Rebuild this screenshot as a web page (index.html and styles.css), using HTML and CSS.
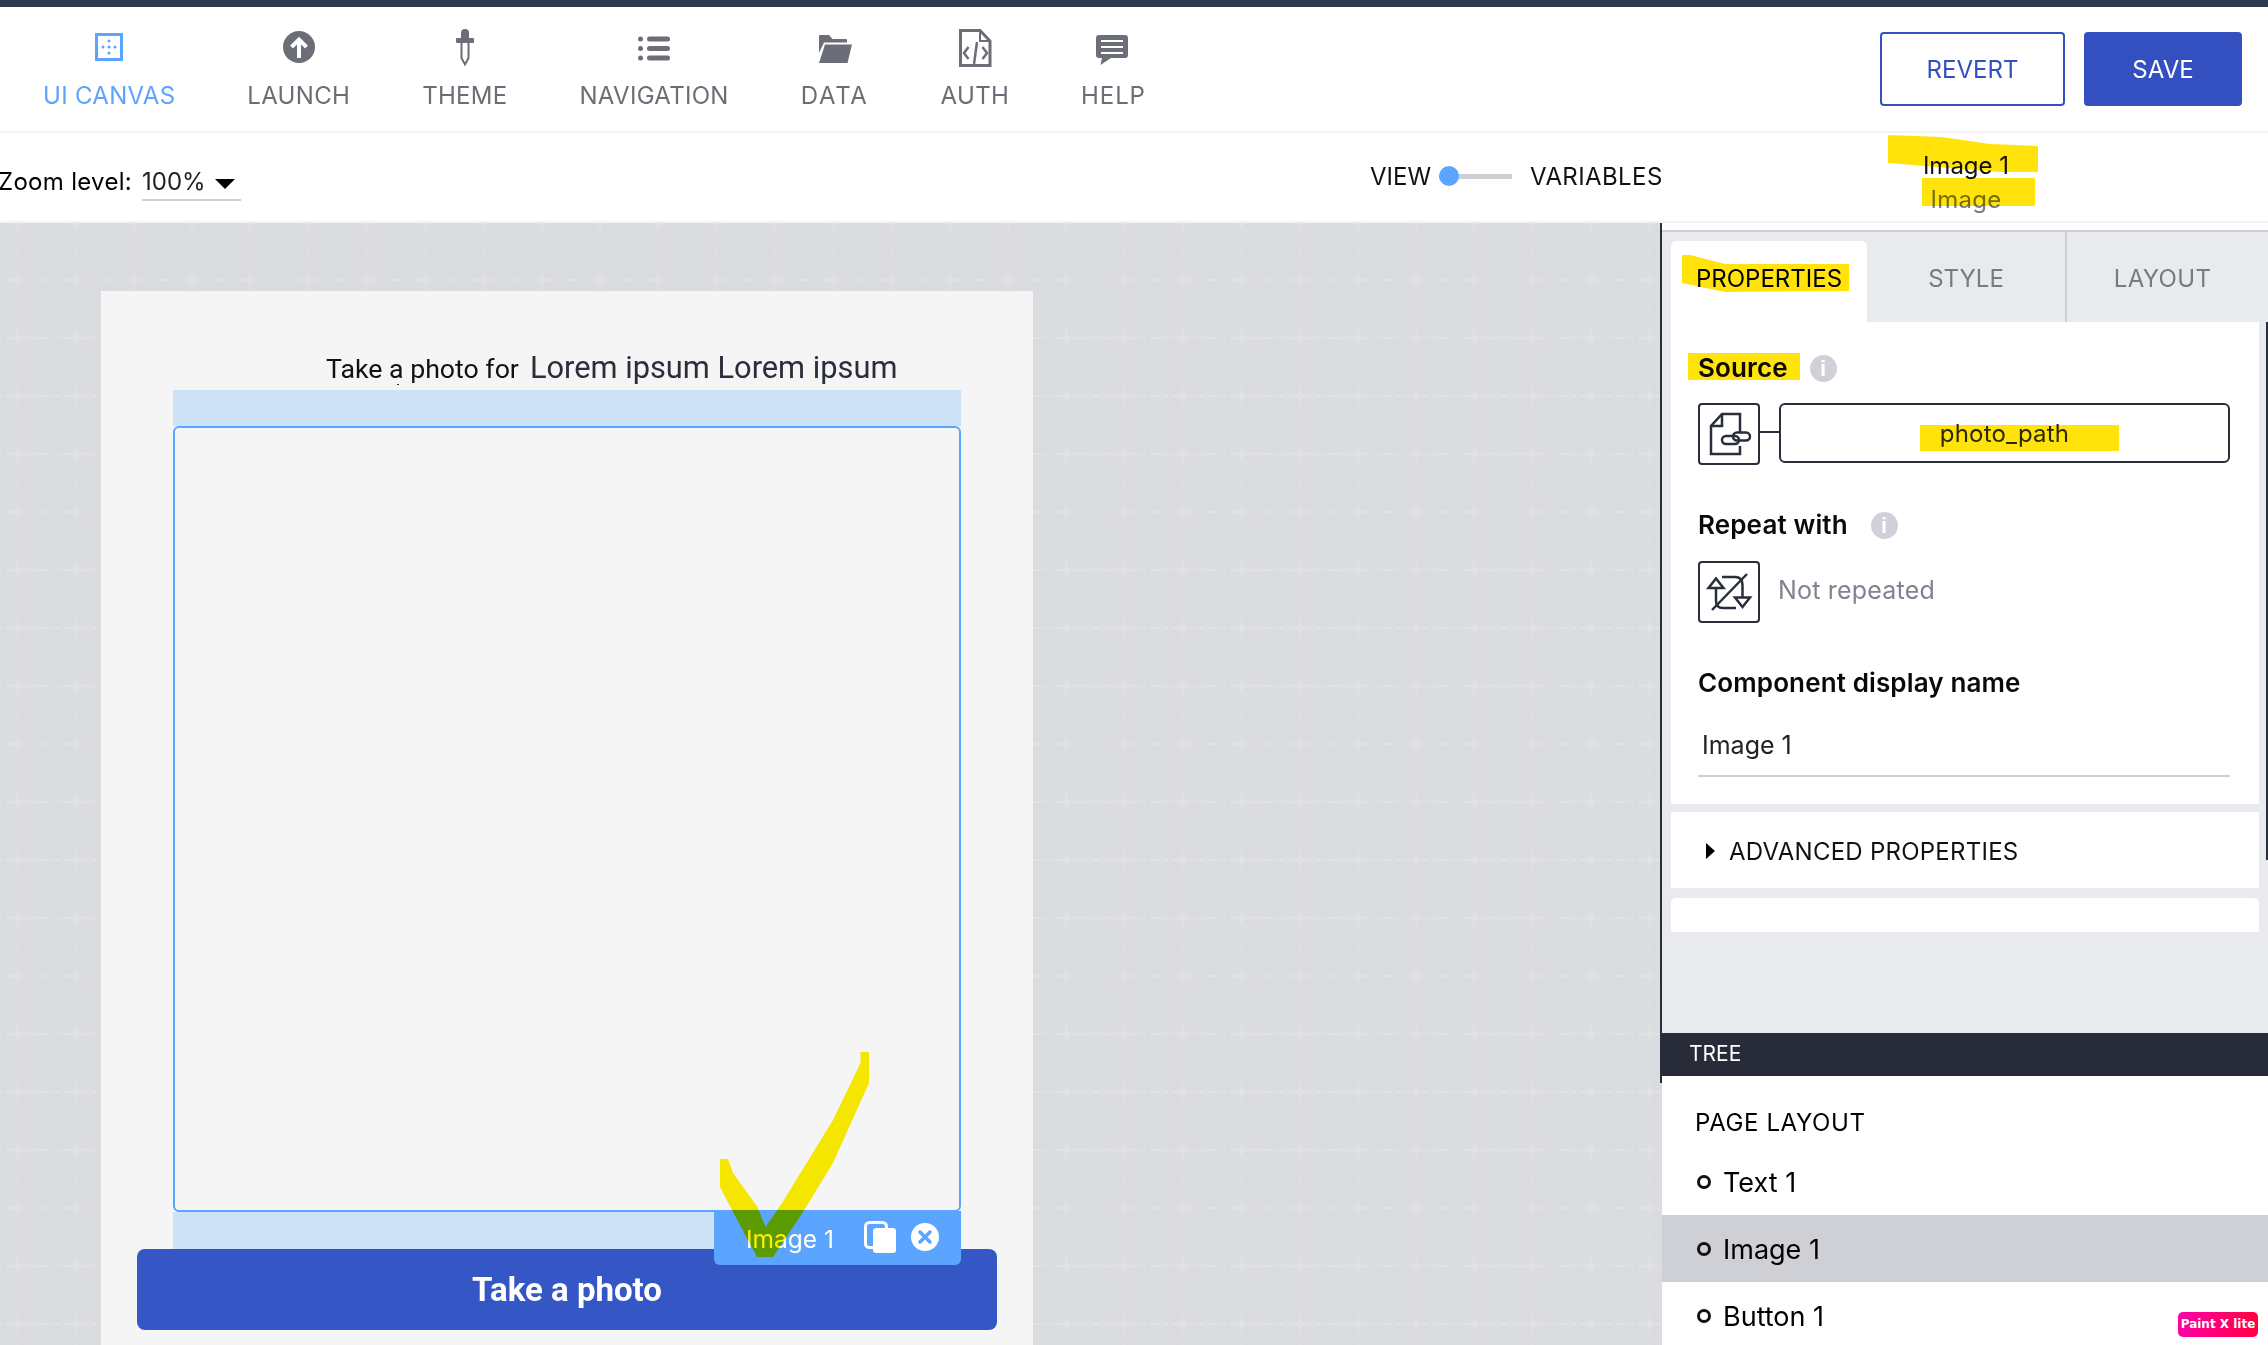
FILE: index.html
```html
<!DOCTYPE html>
<html lang="en">
<head>
<meta charset="utf-8">
<title>UI Canvas</title>
<link rel="stylesheet" href="styles.css">
</head>
<body>
<div class="topbar"></div>
<header class="header">
  <nav class="nav">
    <a class="nav-item active">
      <svg class="nav-icon" viewBox="0 0 40 40"><rect x="7.5" y="7.5" width="25" height="25" fill="none" stroke="#5ba4ff" stroke-width="3"/><g fill="#5ba4ff"><circle cx="20" cy="14" r="1.5"/><circle cx="20" cy="20" r="1.5"/><circle cx="20" cy="26" r="1.5"/><circle cx="14" cy="20" r="1.5"/><circle cx="26" cy="20" r="1.5"/></g></svg>
      <span>UI CANVAS</span>
    </a>
    <a class="nav-item">
      <svg class="nav-icon" viewBox="0 0 40 40"><circle cx="20" cy="20" r="16" fill="#6b6e76"/><path d="M20 31V13M12.500 20L20 12.500L27.500 20" fill="none" stroke="#fff" stroke-width="4"/></svg>
      <span>LAUNCH</span>
    </a>
    <a class="nav-item">
      <svg class="nav-icon" viewBox="0 0 40 40"><path d="M16 11V6a4 4 0 0 1 8 0v5z" fill="#6b6e76"/><rect x="11" y="11" width="18" height="5" rx="1" fill="#6b6e76"/><path d="M16.500 16V31L20 37.500L23.500 31V16" fill="none" stroke="#6b6e76" stroke-width="2"/></svg>
      <span>THEME</span>
    </a>
    <a class="nav-item">
      <svg class="nav-icon" viewBox="0 0 40 40"><g fill="#6b6e76"><circle cx="6.500" cy="12" r="2.500"/><circle cx="6.500" cy="21.500" r="2.500"/><circle cx="6.500" cy="31" r="2.500"/><rect x="13" y="9.500" width="23" height="5" rx="2.500"/><rect x="13" y="19" width="23" height="5" rx="2.500"/><rect x="13" y="28.500" width="23" height="5" rx="2.500"/></g></svg>
      <span>NAVIGATION</span>
    </a>
    <a class="nav-item nav-item-data">
      <svg class="nav-icon" viewBox="0 1 40 40"><g fill="#6b6e76"><path d="M4 10a1 1 0 0 1 1-1h9l3.500 4H31a1 1 0 0 1 1 1v2.500H9L4 27z"/><path d="M10 18.500H37L32.500 37H4z"/></g></svg>
      <span>DATA</span>
    </a>
    <a class="nav-item">
      <svg class="nav-icon" viewBox="0 1 40 40"><g fill="none" stroke="#6b6e76"><path d="M5.500 4.500H25L35 15V39.500H5.500z" stroke-width="3"/><path d="M25 4.500V15H35" stroke-width="2"/><path d="M13.500 21L9 27L13.500 33M27.500 21L32 27L27.500 33M22 16L19 38" stroke-width="2.500"/></g></svg>
      <span>AUTH</span>
    </a>
    <a class="nav-item nav-item-help">
      <svg class="nav-icon" viewBox="0 1 40 40"><path d="M6 9H32a3 3 0 0 1 3 3V29a3 3 0 0 1-3 3H18L7.500 39L9 32H6a3 3 0 0 1-3-3V12a3 3 0 0 1 3-3z" fill="#6b6e76"/><g fill="#fff"><rect x="8" y="14" width="22" height="2"/><rect x="8" y="20" width="22" height="2"/><rect x="8" y="26" width="22" height="2"/></g></svg>
      <span>HELP</span>
    </a>
  </nav>
  <div class="actions">
    <button class="btn btn-outline">REVERT</button>
    <button class="btn btn-solid">SAVE</button>
  </div>
</header>
<section class="toolbar">
  <div class="zoom-level">
    <span class="zoom-label">Zoom level:</span>
    <span class="zoom-select">100%<i class="caret"></i></span>
  </div>
  <div class="view-toggle">
    <span>VIEW</span>
    <span class="switch"><i class="knob"></i></span>
    <span class="variables">VARIABLES</span>
  </div>
  <div class="selected">
    <span class="selected-name">Image 1</span>
    <span class="selected-type">Image</span>
  </div>
</section>
<main class="workspace">
  <section class="canvas">
    <svg class="grid" width="100%" height="100%">
      <defs>
        <pattern id="gridtile" x="-12" y="28" width="58.300" height="58" patternUnits="userSpaceOnUse">
          <g stroke="#e1e2e6" fill="none">
            <path d="M0 29H58.300" stroke-width="2" stroke-dasharray="5 4"/>
            <path d="M29.150 0V58" stroke-width="2" stroke-dasharray="5 4" opacity=".5"/>
            <path d="M24 29H34M29.150 24V34" stroke-width="3"/>
          </g>
        </pattern>
      </defs>
      <rect width="100%" height="100%" fill="url(#gridtile)"/>
    </svg>
    <div class="phone">
      <div class="title">
        <span class="title-label">Take a photo for</span>
        <span class="title-value">Lorem ipsum Lorem ipsum</span>
      </div>
      <div class="image-comp">
        <div class="band"></div>
        <div class="frame"></div>
        <div class="band band-bottom"></div>
        <div class="comp-label">
          <span class="comp-name">Image 1</span>
          <svg class="comp-copy" width="32" height="32" viewBox="0 0 32 32"><rect x="1.500" y="1.500" width="21" height="25" rx="4" fill="none" stroke="#fff" stroke-width="3"/><rect x="9" y="7" width="23" height="25" rx="3" fill="#fff"/></svg>
          <svg class="comp-close" width="28" height="28" viewBox="0 0 28 28"><circle cx="14" cy="14" r="14" fill="#fff"/><path d="M9 9L19 19M19 9L9 19" stroke="#5ba4ff" stroke-width="3.500" stroke-linecap="round"/></svg>
        </div>
      </div>
      <button class="photo-btn">Take a photo</button>
    </div>
  </section>
  <aside class="panel">
    <div class="panel-top">
      <div class="tabs">
        <div class="tab tab-active">PROPERTIES</div>
        <div class="tab">STYLE</div>
        <div class="tab tab-last">LAYOUT</div>
      </div>
      <div class="card card-props">
        <div class="field-label">Source <i class="info info-near">i</i></div>
        <div class="source-row">
          <span class="icon-box">
            <svg width="58" height="58" viewBox="2 2 58 58"><g fill="none" stroke="#2a2e3a" stroke-width="2.500"><path d="M42 30V11H24L13 23V51H42V43"/><path d="M24 11V23H13"/><rect x="24" y="33" width="17" height="8" rx="4" fill="#fff"/><rect x="35" y="29.500" width="17" height="8" rx="4"/></g></svg>
          </span>
          <span class="connector"></span>
          <span class="source-input">photo_path</span>
        </div>
        <div class="field-label field-repeat">Repeat with <i class="info">i</i></div>
        <div class="repeat-row">
          <span class="icon-box">
            <svg width="58" height="58" viewBox="2 2 58 58"><g fill="none" stroke="#2a2e3a" stroke-width="2.500"><path d="M18 27V40Q18 47 25 47H38"/><path d="M44.500 36V24Q44.500 16 37 16H24"/><path d="M18 17.500L10.500 27H25.500z"/><path d="M44.500 46L37 36.500H52z"/><path d="M49 13L14 49"/></g></svg>
          </span>
          <span class="muted">Not repeated</span>
        </div>
        <div class="field-label field-name">Component display name</div>
        <div class="name-input">Image 1</div>
      </div>
      <div class="card card-advanced"><i class="tri"></i>ADVANCED PROPERTIES</div>
      <div class="card card-empty"></div>
    </div>
    <div class="tree-bar">TREE</div>
    <div class="tree">
      <div class="tree-title">PAGE LAYOUT</div>
      <div class="tree-row"><i class="dot"></i>Text 1</div>
      <div class="tree-row tree-row-active"><i class="dot"></i>Image 1</div>
      <div class="tree-row"><i class="dot"></i>Button 1</div>
    </div>
  </aside>
</main>
<svg class="markup" width="2268" height="1345" viewBox="0 0 2268 1345">
  <g fill="#ffe30a">
    <path d="M1888 135L1942 137L1990 144L2038 146V172H2000L1888 163z"/>
    <path d="M1922 178H2035V206H1922z"/>
    <path d="M1682 255H1690L1725 264H1849V291L1725 292L1682 283z"/>
    <path d="M1688 353H1800V380H1688z"/>
    <path d="M1920 425H2119V451H1920z"/>
  </g>
  <path fill="#fff000" d="M720 1159H728L733 1173L757.500 1207L765.500 1227L782 1203L833 1120L860.500 1063V1052H869V1083L833 1163L803 1212L773 1257H757L733 1212L720 1187z"/>
  <rect x="397" y="384" width="2" height="1" fill="#333"/>
</svg>
<div class="watermark">Paint X lite</div>
</body>
</html>
```
FILE: styles.css
```css
* { box-sizing: border-box; }
html, body { margin: 0; padding: 0; background: #fff; }
body {
  width: 2268px;
  height: 1345px;
  overflow: hidden;
  position: relative;
  display: flex;
  flex-direction: column;
  font-family: "Inter", "Lato", sans-serif;
  color: #000;
}
.topbar { height: 7px; background: #2d3a4f; flex: none; }

.header {
  height: 126px;
  flex: none;
  display: flex;
  justify-content: space-between;
  border-bottom: 2px solid #f3f3f5;
  padding: 20px 26px 0 43px;
}
.nav { display: flex; gap: 72px; }
.nav-item {
  display: flex;
  flex-direction: column;
  align-items: center;
  font-size: 24px;
  line-height: 28px;
  letter-spacing: .3px;
  color: #6b6e76;
}
.nav-item-data { letter-spacing: 1.7px; }
.nav-item-help { letter-spacing: .9px; }
.nav-item.active { color: #5ba4ff; }
.nav-icon { width: 40px; height: 40px; margin-bottom: 15px; overflow: visible; flex: none; }
.actions { display: flex; gap: 19px; padding-top: 5px; }
.btn {
  height: 74px;
  font: 24px "Inter", sans-serif;
  border-radius: 4px;
  padding: 0;
}
.btn-outline { width: 185px; background: #fff; color: #3450c0; border: 2px solid #3450c0; }
.btn-solid { width: 158px; background: #3450c0; color: #fff; border: 0; }

.toolbar {
  height: 90px;
  flex: none;
  display: grid;
  grid-template-columns: 1370px 291px 1fr;
  border-bottom: 2px solid #f3f3f5;
  font-size: 24px;
}
.zoom-level { display: flex; align-items: flex-start; gap: 10px; margin-left: -2px; padding-top: 35px; line-height: 28px; }
.zoom-label { letter-spacing: .3px; }
.zoom-select {
  width: 99px;
  height: 33px;
  border-bottom: 2px solid #cfd0d5;
  display: flex;
  align-items: flex-start;
  color: #222;
}
.caret {
  width: 0;
  height: 0;
  margin: 11px 0 0 9px;
  border-left: 10px solid transparent;
  border-right: 10px solid transparent;
  border-top: 10px solid #000;
}
.view-toggle { display: flex; align-items: flex-start; padding-top: 30px; line-height: 28px; color: #111; white-space: nowrap; }
.variables { letter-spacing: .4px; }
.switch {
  width: 73px;
  height: 20px;
  flex: none;
  margin: 3px 18px 0 8px;
  position: relative;
  background: linear-gradient(#cfd0d5, #cfd0d5) no-repeat left center / 100% 5px;
}
.knob { position: absolute; left: 0; top: 0; width: 20px; height: 20px; border-radius: 50%; background: #5ba4ff; }
.selected { display: flex; flex-direction: column; align-items: center; width: 608px; margin-left: 1px; padding-top: 19px; line-height: 28px; }
.selected-name { color: #111; }
.selected-type { color: #777a82; margin-top: 6px; letter-spacing: .3px; }

.workspace { flex: 1; display: flex; min-height: 0; }
.canvas { width: 1660px; flex: none; background: #dbdce0; position: relative; overflow: hidden; padding: 68px 0 0 101px; }
.grid { position: absolute; left: 0; top: 0; }
.phone { position: relative; width: 932px; height: 1100px; background: #f5f5f5; padding: 0 72px; }
.title {
  height: 99px;
  display: flex;
  align-items: baseline;
  gap: 11px;
  padding: 58px 0 0 153px;
  font-family: "Roboto", sans-serif;
  white-space: nowrap;
}
.title-label { font-size: 26.700px; color: #111; }
.title-value { font-size: 30.800px; color: #2a2e3a; }
.image-comp { position: relative; width: 788px; }
.band { height: 36px; background: #cde1f7; }
.band-bottom { height: 37px; }
.frame { height: 786px; border: 2px solid #5ba4ff; border-radius: 6px; }
.comp-label {
  position: absolute;
  right: 0;
  top: 821px;
  width: 247px;
  height: 54px;
  z-index: 2;
  background: #5ba4ff;
  border-radius: 0 0 6px 6px;
  display: flex;
  align-items: center;
  padding: 0 22px 0 32px;
  color: #fff;
  font-size: 24.500px;
}
.comp-name { flex: 1; padding-top: 2px; }
.comp-copy { margin-right: 15px; margin-top: -2px; }
.comp-close { margin-top: -2px; }
.photo-btn {
  display: block;
  width: 860px;
  height: 81px;
  margin-left: -36px;
  background: #3557c5;
  color: #fff;
  border: 0;
  border-radius: 8px;
  font: 700 33px "Roboto", sans-serif;
}

.panel { flex: 1; min-width: 0; position: relative; display: flex; flex-direction: column; background: #fff; border-left: 2px solid #dbdce0; }
.panel::before { content: ""; position: absolute; left: -2px; top: 0; width: 2px; height: 860px; background: #2a2e3a; z-index: 1; }
.panel::after { content: ""; position: absolute; right: 0; top: 99px; width: 2px; height: 538px; background: #2a2e3a; }
.panel-top {
  height: 803px;
  flex: none;
  background: #e9eaee;
  margin-top: 7px;
  border-top: 2px solid #cfd0d5;
  padding: 9px 9px 0;
}
.tabs { display: flex; height: 81px; margin-right: -9px; font-size: 24px; color: #777a82; }
.tab { display: flex; align-items: center; justify-content: center; height: 81px; width: 198px; padding-bottom: 6px; }
.tab-active { width: 196px; background: #fff; color: #000; border-radius: 5px 5px 0 0; }
.tab-last { flex: 1; width: auto; margin-top: -9px; height: 90px; padding: 3px 10px 0 0; border-left: 2px solid #cfd0d5; letter-spacing: .3px; }
.card { background: #fff; width: 588px; }
.card-props { height: 482px; padding: 31px 29px 0 27px; }
.field-label { display: flex; align-items: center; font-size: 26px; font-weight: 600; line-height: 30px; letter-spacing: .13px; color: #0a0a0a; }
.info {
  width: 27px;
  height: 27px;
  border-radius: 50%;
  background: #cfd0d8;
  color: #fff;
  font: 700 22px/27px "Liberation Sans", sans-serif;
  text-align: center;
  margin-left: 23px;
}
.info-near { margin-left: 22px; }
.source-row { display: flex; align-items: flex-start; margin-top: 20px; }
.icon-box { width: 62px; height: 62px; border: 2px solid #2a2e3a; border-radius: 4px; flex: none; display: block; }
.icon-box svg { display: block; }
.connector { width: 19px; height: 2px; background: #2a2e3a; margin-top: 28px; flex: none; }
.source-input {
  flex: 1;
  height: 60px;
  border: 2px solid #2a2e3a;
  border-radius: 6px;
  display: flex;
  align-items: center;
  justify-content: center;
  font-size: 24px;
  letter-spacing: .2px;
  color: #2a2e3a;
}
.field-repeat { margin-top: 45px; }
.repeat-row { display: flex; align-items: center; gap: 18px; margin-top: 21px; }
.muted { font-size: 25px; letter-spacing: .2px; color: #7f8490; margin-top: -4px; }
.field-name { margin-top: 45px; }
.name-input { margin-top: 32px; height: 47px; padding-left: 4px; font-size: 25px; line-height: 30px; color: #222; border-bottom: 2px solid #cfd0d5; }
.card-advanced {
  height: 76px;
  margin-top: 8px;
  display: flex;
  align-items: center;
  padding: 2px 0 0 35px;
  font-size: 24px;
  letter-spacing: .25px;
  color: #111;
}
.tri {
  width: 0;
  height: 0;
  margin-right: 14px;
  border-top: 8px solid transparent;
  border-bottom: 8px solid transparent;
  border-left: 9px solid #000;
}
.card-empty { height: 34px; margin-top: 10px; border-radius: 5px 5px 0 0; }
.tree-bar { height: 43px; flex: none; background: #282c38; color: #fff; font-size: 21px; line-height: 41px; padding-left: 27px; position: relative; z-index: 2; }
.tree { flex: 1; background: #fff; }
.tree-title { height: 72px; padding: 33px 0 0 33px; font-size: 24px; line-height: 28px; letter-spacing: .6px; }
.tree-row { height: 67px; display: flex; align-items: center; gap: 12px; padding: 2px 0 0 35px; font-size: 27px; }
.tree-row-active { background: #cfd0d5; }
.dot { width: 14px; height: 14px; border: 3px solid #111; border-radius: 50%; flex: none; margin-top: -2px; }

.markup { position: absolute; left: 0; top: 0; mix-blend-mode: multiply; pointer-events: none; z-index: 5; }
.watermark {
  position: absolute;
  left: 2178px;
  top: 1312px;
  width: 80px;
  height: 25px;
  border-radius: 5px;
  background: linear-gradient(90deg, #ff00a8, #ff0040);
  color: #fff;
  font: 700 12px/25px "DejaVu Sans", sans-serif;
  text-align: center;
  white-space: nowrap;
  z-index: 6;
}
```
